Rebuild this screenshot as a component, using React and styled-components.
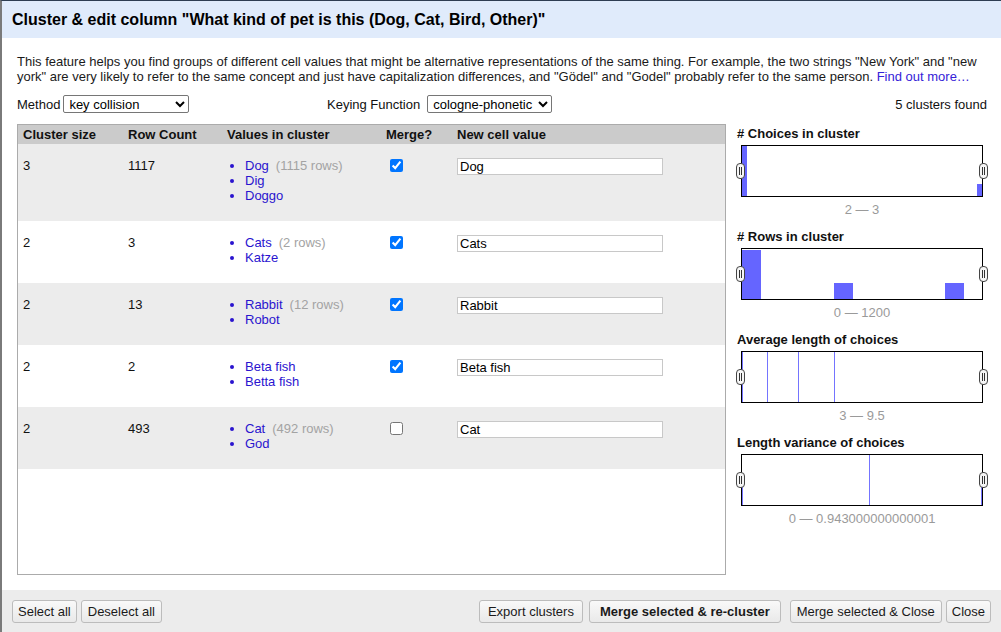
import React from 'react';
import styled, { createGlobalStyle } from 'styled-components';

const GlobalStyle = createGlobalStyle`
    html, body {
        margin: 0;
        padding: 0;
        background: #fff;
    }
    body {
        font-family: 'Liberation Sans', Arial, sans-serif;
        font-size: 13px;
        color: #111;
    }
`;

const Dialog = styled.div`
    width: 1001px;
    height: 632px;
    box-sizing: border-box;
    border-top: 1px solid #2e3d52;
    border-left: 2px solid #7a7a7a;
    display: flex;
    flex-direction: column;
    background: #fff;
    overflow: hidden;
`;

const TitleBar = styled.div`
    height: 37px;
    flex: none;
    background: #e0ebfb;
    display: flex;
    align-items: center;
    padding-left: 10px;
    font-size: 16px;
    font-weight: bold;
    color: #000;
`;

const Body = styled.div`
    flex: 1;
    display: flex;
    flex-direction: column;
    padding: 16px 14px 15px 15px;
    min-height: 0;
`;

const Description = styled.p`
    margin: 0;
    line-height: 15px;
    color: #1a1a1a;

    a {
        color: #3522d8;
        text-decoration: none;
    }
`;

const Controls = styled.div`
    display: grid;
    grid-template-columns: 310px auto 1fr;
    align-items: center;
    margin-top: 11px;
    height: 18px;
`;

const Field = styled.label`
    display: flex;
    align-items: center;
    gap: ${(p) => p.$gap || 3}px;
`;

const Select = styled.select`
    font-family: 'Liberation Sans', Arial, sans-serif;
    font-size: 13px;
    height: 18px;
    width: ${(p) => p.$width}px;
    padding: 0 1px;
    border: 1px solid #767676;
    border-radius: 2px;
    background: #fff;
    color: #000;
`;

const Found = styled.div`
    text-align: right;
`;

const Main = styled.div`
    flex: 1;
    display: flex;
    gap: 11px;
    margin-top: 11px;
    min-height: 0;
`;

const TableBox = styled.div`
    width: 709px;
    flex: none;
    box-sizing: border-box;
    border: 1px solid #ababab;
    display: flex;
    flex-direction: column;
`;

const Row = styled.div`
    display: grid;
    grid-template-columns: 105px 99px 159px 71px 1fr;
    padding: ${(p) => (p.$head ? '0 0 0 5px' : '14px 0 18px 5px')};
    height: ${(p) => (p.$head ? '19px' : 'auto')};
    align-items: ${(p) => (p.$head ? 'center' : 'start')};
    line-height: 15px;
    background: ${(p) => (p.$head ? '#cbcbcb' : p.$shade ? '#ececec' : '#fff')};
    font-weight: ${(p) => (p.$head ? 'bold' : 'normal')};
`;

const Values = styled.ul`
    margin: 0;
    padding-left: 18px;
    list-style: disc;
`;

const Value = styled.li`
    color: #2a14cf;
`;

const Count = styled.span`
    color: #a3a3a3;
    margin-left: 7px;
`;

const Check = styled.input`
    margin: 1px 0 0 4px;
    width: 13px;
    height: 13px;
`;

const TextInput = styled.input`
    box-sizing: border-box;
    width: 206px;
    height: 17px;
    border: 1px solid #c8c8c8;
    padding: 0 2px;
    margin: 0;
    font-family: 'Liberation Sans', Arial, sans-serif;
    font-size: 13px;
    color: #000;
    outline: none;
`;

const Side = styled.div`
    flex: 1;
    padding-top: 2px;
`;

const Facet = styled.div`
    padding-bottom: 12px;
`;

const FacetTitle = styled.div`
    font-weight: bold;
    line-height: 15px;
    color: #111;
`;

const Chart = styled.div`
    position: relative;
    width: 242px;
    height: 52px;
    box-sizing: border-box;
    margin: 4px 0 0 4px;
    border: 1px solid #000;

    svg {
        display: block;
    }
`;

const Handle = styled.span`
    position: absolute;
    top: 17px;
    ${(p) => (p.$right ? 'right: -6px;' : 'left: -6px;')}
    width: 9px;
    height: 16px;
    box-sizing: border-box;
    border: 1px solid #444;
    border-radius: 4px;
    background: #f6f6f6;
    display: flex;
    justify-content: center;
    gap: 1px;
    padding: 3px 0;

    &::before,
    &::after {
        content: '';
        width: 1px;
        background: #333;
    }
`;

const Range = styled.div`
    margin: 5px 0 0 4px;
    width: 242px;
    text-align: center;
    color: #9a9a9a;
    line-height: 15px;
`;

const Footer = styled.div`
    flex: none;
    height: 42px;
    background: #ececec;
    display: flex;
    align-items: center;
    padding: 0 10px;
    gap: 4px;
`;

const Spacer = styled.div`
    flex: 1;
`;

const Button = styled.button`
    font-family: 'Liberation Sans', Arial, sans-serif;
    font-size: 13px;
    font-weight: ${(p) => (p.$primary ? 'bold' : 'normal')};
    height: 23px;
    padding: 0 ${(p) => p.$pad || 5}px;
    margin-left: ${(p) => p.$gap || 0}px;
    border: 1px solid #bcbcbc;
    border-radius: 3px;
    background: linear-gradient(#f9f9f9, #e9e9e9);
    color: #1a1a1a;
`;

const clusters = [
    { size: 3, rows: 1117, values: [['Dog', 1115], ['Dig'], ['Doggo']], merge: true, value: 'Dog' },
    { size: 2, rows: 3, values: [['Cats', 2], ['Katze']], merge: true, value: 'Cats' },
    { size: 2, rows: 13, values: [['Rabbit', 12], ['Robot']], merge: true, value: 'Rabbit' },
    { size: 2, rows: 2, values: [['Beta fish'], ['Betta fish']], merge: true, value: 'Beta fish' },
    { size: 2, rows: 493, values: [['Cat', 492], ['God']], merge: false, value: 'Cat' },
];

const BAR = '#6565ff';
const LINE = '#7474ff';

const facets = [
    {
        title: '# Choices in cluster',
        range: '2 \u2014 3',
        marks: [
            { x: 0, y: 0, w: 5, h: 50 },
            { x: 235, y: 38, w: 5, h: 12 },
        ],
    },
    {
        title: '# Rows in cluster',
        range: '0 \u2014 1200',
        marks: [
            { x: 0, y: 1, w: 19, h: 49 },
            { x: 92, y: 34, w: 19, h: 16 },
            { x: 203, y: 34, w: 19, h: 16 },
        ],
    },
    {
        title: 'Average length of choices',
        range: '3 \u2014 9.5',
        marks: [
            { x: 0, y: 0, w: 1, h: 50, line: true },
            { x: 25, y: 0, w: 1, h: 50, line: true },
            { x: 56, y: 0, w: 1, h: 50, line: true },
            { x: 92, y: 0, w: 1, h: 50, line: true },
        ],
    },
    {
        title: 'Length variance of choices',
        range: '0 \u2014 0.943000000000001',
        marks: [
            { x: 0, y: 32, w: 1, h: 18, line: true },
            { x: 127, y: 0, w: 1, h: 50, line: true },
            { x: 239, y: 32, w: 1, h: 18, line: true },
        ],
    },
];

const App = () => {
    return (
        <Dialog>
            <GlobalStyle />
            <TitleBar>Cluster &amp; edit column "What kind of pet is this (Dog, Cat, Bird, Other)"</TitleBar>
            <Body>
                <Description>
                    This feature helps you find groups of different cell values that might be alternative
                    representations of the same thing. For example, the two strings "New York" and "new
                    york" are very likely to refer to the same concept and just have capitalization
                    differences, and "Gödel" and "Godel" probably refer to the same person.{' '}
                    <a href="#">Find out more…</a>
                </Description>
                <Controls>
                    <Field>
                        Method
                        <Select $width={126} defaultValue="key collision">
                            <option>key collision</option>
                            <option>nearest neighbor</option>
                        </Select>
                    </Field>
                    <Field $gap={7}>
                        Keying Function
                        <Select $width={125} defaultValue="cologne-phonetic">
                            <option>fingerprint</option>
                            <option>ngram-fingerprint</option>
                            <option>metaphone3</option>
                            <option>cologne-phonetic</option>
                        </Select>
                    </Field>
                    <Found>5 clusters found</Found>
                </Controls>
                <Main>
                    <TableBox>
                        <Row $head>
                            <span>Cluster size</span>
                            <span>Row Count</span>
                            <span>Values in cluster</span>
                            <span>Merge?</span>
                            <span>New cell value</span>
                        </Row>
                        {clusters.map((c, i) => (
                            <Row key={i} $shade={i % 2 === 0}>
                                <span>{c.size}</span>
                                <span>{c.rows}</span>
                                <Values>
                                    {c.values.map(([name, n]) => (
                                        <Value key={name}>
                                            {name}
                                            {n && <Count>({n} rows)</Count>}
                                        </Value>
                                    ))}
                                </Values>
                                <span>
                                    <Check type="checkbox" defaultChecked={c.merge} />
                                </span>
                                <span>
                                    <TextInput defaultValue={c.value} />
                                </span>
                            </Row>
                        ))}
                    </TableBox>
                    <Side>
                        {facets.map((f) => (
                            <Facet key={f.title}>
                                <FacetTitle>{f.title}</FacetTitle>
                                <Chart>
                                    <svg width="240" height="50" viewBox="0 0 240 50">
                                        {f.marks.map((m, k) => (
                                            <rect
                                                key={k}
                                                x={m.x}
                                                y={m.y}
                                                width={m.w}
                                                height={m.h}
                                                fill={m.line ? LINE : BAR}
                                            />
                                        ))}
                                    </svg>
                                    <Handle />
                                    <Handle $right />
                                </Chart>
                                <Range>{f.range}</Range>
                            </Facet>
                        ))}
                    </Side>
                </Main>
            </Body>
            <Footer>
                <Button>Select all</Button>
                <Button $pad={6}>Deselect all</Button>
                <Spacer />
                <Button $pad={8}>Export clusters</Button>
                <Button $primary $pad={10} $gap={2}>Merge selected &amp; re-cluster</Button>
                <Button $pad={6} $gap={5}>Merge selected &amp; Close</Button>
                <Button>Close</Button>
            </Footer>
        </Dialog>
    );
};

export default App;
